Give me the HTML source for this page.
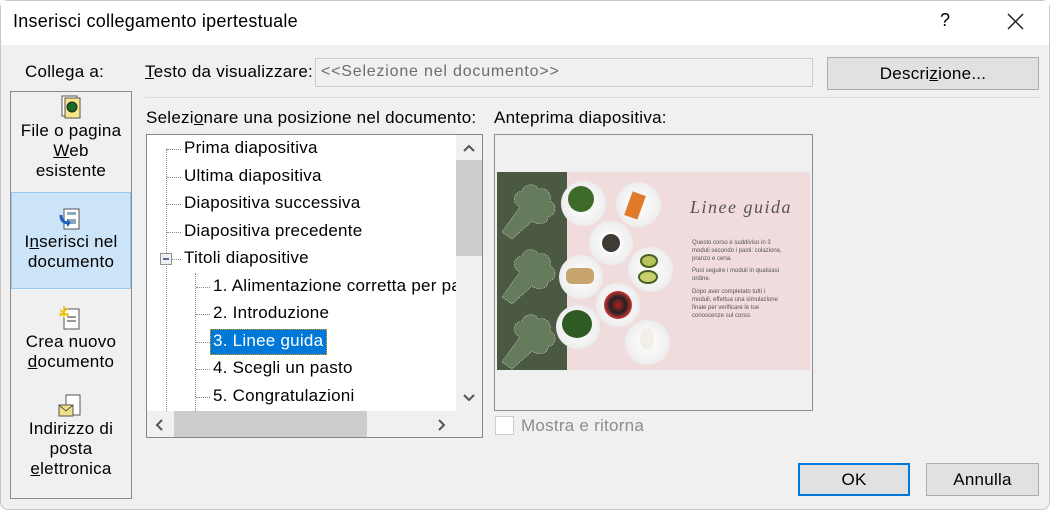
<!DOCTYPE html>
<html><head><meta charset="utf-8"><style>
*{box-sizing:border-box;margin:0;padding:0}
body{width:1050px;height:510px;background:#fff;font-family:"Segoe UI","Liberation Sans",sans-serif;font-size:17px;letter-spacing:0.25px;color:#000;position:relative;overflow:hidden}
.dlg{position:absolute;left:0;top:0;width:1050px;height:510px;background:#f0f0f0;border-radius:8px;overflow:hidden;box-shadow:inset 0 0 0 1px #c8c8c8}
.tb{position:absolute;left:1px;top:1px;width:1048px;height:44px;background:#fff}
.a{position:absolute;white-space:nowrap}
.u{text-decoration:underline}
.btn{position:absolute;background:#e1e1e1;border:1px solid #adadad;text-align:center}
.dh{position:absolute;border-top:1px dotted #888;height:0}
.dv{position:absolute;border-left:1px dotted #888;width:0}
.plate{position:absolute;border-radius:50%;background:radial-gradient(circle,#fff 0,#f2f2f2 55%,#e2e2e2 100%)}
.food{position:absolute;border-radius:50%}
.st{position:absolute;font-size:6px;line-height:8px;color:#555;font-family:"Liberation Sans",sans-serif;letter-spacing:0}
</style></head><body><div class="dlg">
<div class="tb"></div>
<div class="a" style="left:13px;top:11px;font-size:18px">Inserisci collegamento ipertestuale</div>
<div class="a" style="left:940px;top:10px;font-size:18px">?</div>
<svg class="a" style="left:1007px;top:13px" width="17" height="17"><path d="M1 1L16 16M16 1L1 16" stroke="#222" stroke-width="1.5"/></svg>

<div class="a" style="left:25px;top:62px">Collega a:</div>
<div class="a" style="left:10px;top:91px;width:122px;height:408px;border:1px solid #8a8a8a;background:#f0f0f0"></div>
<div class="a" style="left:11px;top:192px;width:120px;height:97px;background:#cce4f7;border:1px solid #99c9ef"></div>
<svg class="a" style="left:59px;top:95px" width="24" height="24"><rect x="3" y="1" width="15" height="20" fill="#fff" stroke="#555"/><rect x="6" y="3" width="15" height="20" fill="#f7e58a" stroke="#555"/><circle cx="13" cy="12" r="5" fill="#1a6a2a" stroke="#222"/></svg>
<svg class="a" style="left:58px;top:207px" width="24" height="26"><rect x="6" y="2" width="15" height="20" fill="#fff" stroke="#555"/><rect x="9" y="5" width="9" height="3" fill="#8ab"/><rect x="9" y="12" width="9" height="5" fill="#8ab"/><path d="M3 8q0 8 8 8" stroke="#1e5fbf" stroke-width="3" fill="none"/><path d="M9 12l4 4-4 4z" fill="#1e5fbf"/></svg>
<svg class="a" style="left:58px;top:306px" width="24" height="26"><rect x="6" y="3" width="15" height="20" fill="#fff" stroke="#555"/><rect x="9" y="10" width="9" height="2" fill="#999"/><rect x="9" y="14" width="9" height="2" fill="#999"/><path d="M2 4l8 6M6 0v12M1 8h10M10 2L2 10" stroke="#f0c000" stroke-width="1.5"/></svg>
<svg class="a" style="left:57px;top:394px" width="26" height="26"><rect x="9" y="1" width="14" height="20" fill="#fff" stroke="#555"/><rect x="2" y="11" width="14" height="11" fill="#f1df85" stroke="#555"/><path d="M2 11l7 6 7-6" stroke="#555" fill="none"/></svg>
<div class="a" style="left:11px;width:120px;top:121px;text-align:center;line-height:20px">File o pagina<br><span class="u">W</span>eb<br>esistente</div>
<div class="a" style="left:11px;width:120px;top:232px;text-align:center;line-height:20px">I<span class="u">n</span>serisci nel<br>documento</div>
<div class="a" style="left:11px;width:120px;top:332px;text-align:center;line-height:20px">Crea nuovo<br><span class="u">d</span>ocumento</div>
<div class="a" style="left:11px;width:120px;top:419px;text-align:center;line-height:20px">Indirizzo di<br>posta<br><span class="u">e</span>lettronica</div>

<div class="a" style="left:145px;top:62px"><span class="u">T</span>esto da visualizzare:</div>
<div class="a" style="left:315px;top:58px;width:498px;height:29px;border:1px solid #ccc;background:#f0f0f0;color:#6d6d6d;padding:4px 5px;font-size:16px;letter-spacing:0.8px">&lt;&lt;Selezione nel documento&gt;&gt;</div>
<div class="btn" style="left:827px;top:57px;width:212px;height:33px;line-height:31px">Descri<span class="u">z</span>ione...</div>
<div class="a" style="left:145px;top:97px;width:895px;border-top:1px solid #dcdcdc"></div>

<div class="a" style="left:146px;top:108px">Selezi<span class="u">o</span>nare una posizione nel documento:</div>
<div class="a" style="left:146px;top:134px;width:337px;height:304px;border:1px solid #828790;background:#fff;overflow:hidden">
 <div class="dv" style="left:19px;top:14px;height:290px"></div>
 <div class="dh" style="left:20px;top:14px;width:14px"></div>
 <div class="dh" style="left:20px;top:42px;width:14px"></div>
 <div class="dh" style="left:20px;top:69px;width:14px"></div>
 <div class="dh" style="left:20px;top:97px;width:14px"></div>
 <div class="dh" style="left:20px;top:124px;width:14px"></div>
 <div class="a" style="left:13px;top:118px;width:12px;height:12px;border:1px solid #919191;background:#f0f0f0"><div style="position:absolute;left:2px;top:4px;width:6px;height:2px;background:#5a6b9c"></div></div>
 <div class="dv" style="left:48px;top:138px;height:170px"></div>
 <div class="dh" style="left:49px;top:152px;width:14px"></div>
 <div class="dh" style="left:49px;top:179px;width:14px"></div>
 <div class="dh" style="left:49px;top:207px;width:14px"></div>
 <div class="dh" style="left:49px;top:234px;width:14px"></div>
 <div class="dh" style="left:49px;top:262px;width:14px"></div>
 <div class="a" style="left:37px;top:3px">Prima diapositiva</div>
 <div class="a" style="left:37px;top:31px">Ultima diapositiva</div>
 <div class="a" style="left:37px;top:58px">Diapositiva successiva</div>
 <div class="a" style="left:37px;top:86px">Diapositiva precedente</div>
 <div class="a" style="left:37px;top:113px">Titoli diapositive</div>
 <div class="a" style="left:66px;top:141px">1. Alimentazione corretta per pasti</div>
 <div class="a" style="left:66px;top:168px">2. Introduzione</div>
 <div class="a" style="left:63px;top:194px;width:117px;height:26px;background:#0078d7;border:1px dotted #f0a000"></div>
 <div class="a" style="left:66px;top:196px;color:#fff">3. Linee guida</div>
 <div class="a" style="left:66px;top:223px">4. Scegli un pasto</div>
 <div class="a" style="left:66px;top:251px">5. Congratulazioni</div>
 <div class="a" style="left:309px;top:0;width:27px;height:276px;background:#f0f0f0"></div>
 <div class="a" style="left:309px;top:25px;width:26px;height:96px;background:#cdcdcd"></div>
 <svg class="a" style="left:315px;top:8px" width="14" height="10"><path d="M2 8l5-5 5 5" stroke="#555" stroke-width="2" fill="none"/></svg>
 <svg class="a" style="left:315px;top:258px" width="14" height="10"><path d="M2 2l5 5 5-5" stroke="#555" stroke-width="2" fill="none"/></svg>
 <div class="a" style="left:0;top:276px;width:336px;height:27px;background:#f0f0f0"></div>
 <div class="a" style="left:27px;top:276px;width:193px;height:27px;background:#cdcdcd"></div>
 <svg class="a" style="left:7px;top:283px" width="10" height="14"><path d="M8 2l-5 5 5 5" stroke="#555" stroke-width="2" fill="none"/></svg>
 <svg class="a" style="left:290px;top:283px" width="10" height="14"><path d="M2 2l5 5-5 5" stroke="#555" stroke-width="2" fill="none"/></svg>
 <div class="a" style="left:309px;top:276px;width:27px;height:27px;background:#f0f0f0"></div>
</div>

<div class="a" style="left:494px;top:108px">Anteprima diapositiva:</div>
<div class="a" style="left:494px;top:134px;width:319px;height:277px;border:1px solid #8d8d8d;background:#f0f0f0"></div>
<div class="a" style="left:497px;top:172px;width:313px;height:198px;background:#f0dcdd"></div>
<div class="a" style="left:497px;top:172px;width:70px;height:198px;background:#4b5943"></div>
<svg class="a" style="left:497px;top:172px" width="70" height="198">
<g fill="#667a5c" stroke="#c9d4c0" stroke-width="0.6" stroke-dasharray="1.5 1">
<path d="M5 60l18-25c-8-4-8-14 2-16 2-8 14-8 16-2 8-2 14 4 12 12 8 4 6 14-2 16 0 8-12 8-16 4l-20 18z"/>
<path d="M5 125l18-25c-8-4-8-14 2-16 2-8 14-8 16-2 8-2 14 4 12 12 8 4 6 14-2 16 0 8-12 8-16 4l-20 18z"/>
<path d="M5 190l18-25c-8-4-8-14 2-16 2-8 14-8 16-2 8-2 14 4 12 12 8 4 6 14-2 16 0 8-12 8-16 4l-20 18z"/>
</g></svg>
<div class="plate" style="left:561px;top:181px;width:45px;height:45px"></div><div class="food" style="left:568px;top:186px;width:26px;height:26px;background:#3e6b2a"></div>
<div class="plate" style="left:616px;top:182px;width:45px;height:45px"></div><div class="a" style="left:628px;top:193px;width:14px;height:25px;background:#e07a2a;transform:rotate(20deg)"></div>
<div class="plate" style="left:589px;top:221px;width:44px;height:44px"></div><div class="food" style="left:600px;top:232px;width:22px;height:22px;background:#3f3a34;border:2px solid #fff"></div>
<div class="plate" style="left:628px;top:247px;width:45px;height:45px"></div><div class="food" style="left:640px;top:254px;width:18px;height:14px;background:#b6c45a;border:2px solid #46601f"></div><div class="food" style="left:638px;top:270px;width:20px;height:14px;background:#c9cf6a;border:2px solid #46601f"></div>
<div class="plate" style="left:559px;top:255px;width:44px;height:44px"></div><div class="a" style="left:566px;top:268px;width:28px;height:16px;background:#c9a56e;border-radius:6px"></div>
<div class="plate" style="left:596px;top:283px;width:44px;height:44px"></div><div class="food" style="left:604px;top:291px;width:28px;height:28px;background:radial-gradient(circle,#b22 0,#222 40%,#c33 70%,#222 100%)"></div>
<div class="plate" style="left:556px;top:305px;width:44px;height:44px"></div><div class="food" style="left:562px;top:310px;width:30px;height:28px;background:#2e5a23"></div>
<div class="plate" style="left:625px;top:320px;width:45px;height:45px"></div><div class="food" style="left:640px;top:328px;width:14px;height:22px;background:#f2efe8"></div>
<div class="a" style="left:690px;top:197px;font-family:'URW Chancery L','Liberation Serif',cursive;font-style:italic;font-size:18px;color:#555;letter-spacing:1.5px">Linee guida</div>
<div class="st" style="left:692px;top:239px">Questo corso è suddiviso in 3<br>moduli secondo i pasti: colazione,<br>pranzo e cena.</div>
<div class="st" style="left:692px;top:267px">Puoi seguire i moduli in qualsiasi<br>ordine.</div>
<div class="st" style="left:692px;top:288px">Dopo aver completato tutti i<br>moduli, effettua una simulazione<br>finale per verificare le tue<br>conoscenze sul corso.</div>

<div class="a" style="left:495px;top:416px;width:19px;height:19px;border:1px solid #ccc;background:#fff"></div>
<div class="a" style="left:521px;top:416px;color:#8d8d8d">Mostra e ritorna</div>

<div class="btn" style="left:798px;top:463px;width:112px;height:33px;line-height:29px;border:2px solid #0078d7">OK</div>
<div class="btn" style="left:926px;top:463px;width:113px;height:33px;line-height:31px">Annulla</div>
</div></body></html>
